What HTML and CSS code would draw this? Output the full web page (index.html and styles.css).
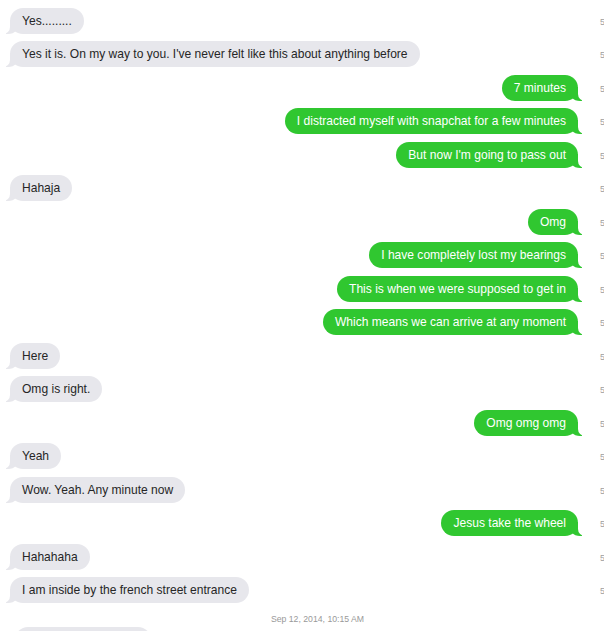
FILE: index.html
```html
<!DOCTYPE html>
<html lang="en">

<head>
    <meta charset="UTF-8">
    <meta name="viewport" content="width=device-width, initial-scale=1.0">
    <title>Messages</title>
    <link rel="stylesheet" href="styles.css">
</head>

<body>
    <div class="thread">
        <div class="row"><div class="msg"><span class="bubble recv">Yes.........</span></div><span class="time">5</span></div>
        <div class="row"><div class="msg"><span class="bubble recv">Yes it is. On my way to you. I've never felt like this about anything before</span></div><span class="time">5</span></div>
        <div class="row sent"><div class="msg"><span class="bubble out">7 minutes</span></div><span class="time">5</span></div>
        <div class="row sent"><div class="msg"><span class="bubble out">I distracted myself with snapchat for a few minutes</span></div><span class="time">5</span></div>
        <div class="row sent"><div class="msg"><span class="bubble out">But now I'm going to pass out</span></div><span class="time">5</span></div>
        <div class="row"><div class="msg"><span class="bubble recv">Hahaja</span></div><span class="time">5</span></div>
        <div class="row sent"><div class="msg"><span class="bubble out">Omg</span></div><span class="time">5</span></div>
        <div class="row sent"><div class="msg"><span class="bubble out">I have completely lost my bearings</span></div><span class="time">5</span></div>
        <div class="row sent"><div class="msg"><span class="bubble out">This is when we were supposed to get in</span></div><span class="time">5</span></div>
        <div class="row sent"><div class="msg"><span class="bubble out">Which means we can arrive at any moment</span></div><span class="time">5</span></div>
        <div class="row"><div class="msg"><span class="bubble recv">Here</span></div><span class="time">5</span></div>
        <div class="row"><div class="msg"><span class="bubble recv">Omg is right.</span></div><span class="time">5</span></div>
        <div class="row sent"><div class="msg"><span class="bubble out">Omg omg omg</span></div><span class="time">5</span></div>
        <div class="row"><div class="msg"><span class="bubble recv">Yeah</span></div><span class="time">5</span></div>
        <div class="row"><div class="msg"><span class="bubble recv">Wow. Yeah. Any minute now</span></div><span class="time">5</span></div>
        <div class="row sent"><div class="msg"><span class="bubble out">Jesus take the wheel</span></div><span class="time">5</span></div>
        <div class="row"><div class="msg"><span class="bubble recv">Hahahaha</span></div><span class="time">5</span></div>
        <div class="row"><div class="msg"><span class="bubble recv">I am inside by the french street entrance</span></div><span class="time">5</span></div>

        <div class="stamp">Sep 12, 2014, 10:15 AM</div>

        <div class="row"><div class="msg"><span class="bubble recv next">&nbsp;</span></div><span class="time"></span></div>
    </div>
</body>

</html>
```

FILE: styles.css
```css
/* Basic Reset */
* {
    margin: 0;
    padding: 0;
    box-sizing: border-box;
}

body {
    font-family: "Liberation Sans", Arial, sans-serif;
    background-color: #fff;
    color: #222;
    overflow: hidden;
}

/* Conversation */
.thread {
    display: flex;
    flex-direction: column;
    gap: 7.53px;
    padding: 7.5px 0 0 10px;
}

.row {
    display: grid;
    grid-template-columns: 1fr 26px;
    align-items: center;
    height: 26px;
}

.msg {
    display: flex;
}

.row.sent .msg {
    justify-content: flex-end;
}

/* Bubbles */
.bubble {
    position: relative;
    display: inline-block;
    height: 26px;
    line-height: 26px;
    padding: 0 12px;
    font-size: 12.05px;
    border-radius: 13px;
    white-space: nowrap;
}

.bubble.recv {
    background-color: #e7e7ec;
    color: #262626;
}

.bubble.out {
    background-color: #30c730;
    color: #fff;
}

/* Tails */
.bubble.recv::before,
.bubble.recv::after,
.bubble.out::before,
.bubble.out::after {
    content: "";
    position: absolute;
    bottom: 0;
    height: 14px;
}

.bubble.recv::before {
    left: -4px;
    width: 14px;
    background-color: #e7e7ec;
    border-bottom-right-radius: 12px;
}

.bubble.recv::after {
    left: -7px;
    width: 7px;
    background-color: #fff;
    border-bottom-right-radius: 7px;
}

.bubble.out::before {
    right: -4px;
    width: 14px;
    background-color: #30c730;
    border-bottom-left-radius: 12px;
}

.bubble.out::after {
    right: -7px;
    width: 7px;
    background-color: #fff;
    border-bottom-left-radius: 7px;
}

.bubble.next {
    width: 136px;
    margin-left: 5px;
}

/* Side times */
.time {
    padding-left: 22px;
    padding-top: 2px;
    font-size: 9px;
    color: #a0a0a0;
}

.stamp {
    text-align: center;
    font-size: 8.7px;
    line-height: 12px;
    height: 12px;
    color: #999;
    margin: 2.5px 0 -5.5px 21px;
}
```
